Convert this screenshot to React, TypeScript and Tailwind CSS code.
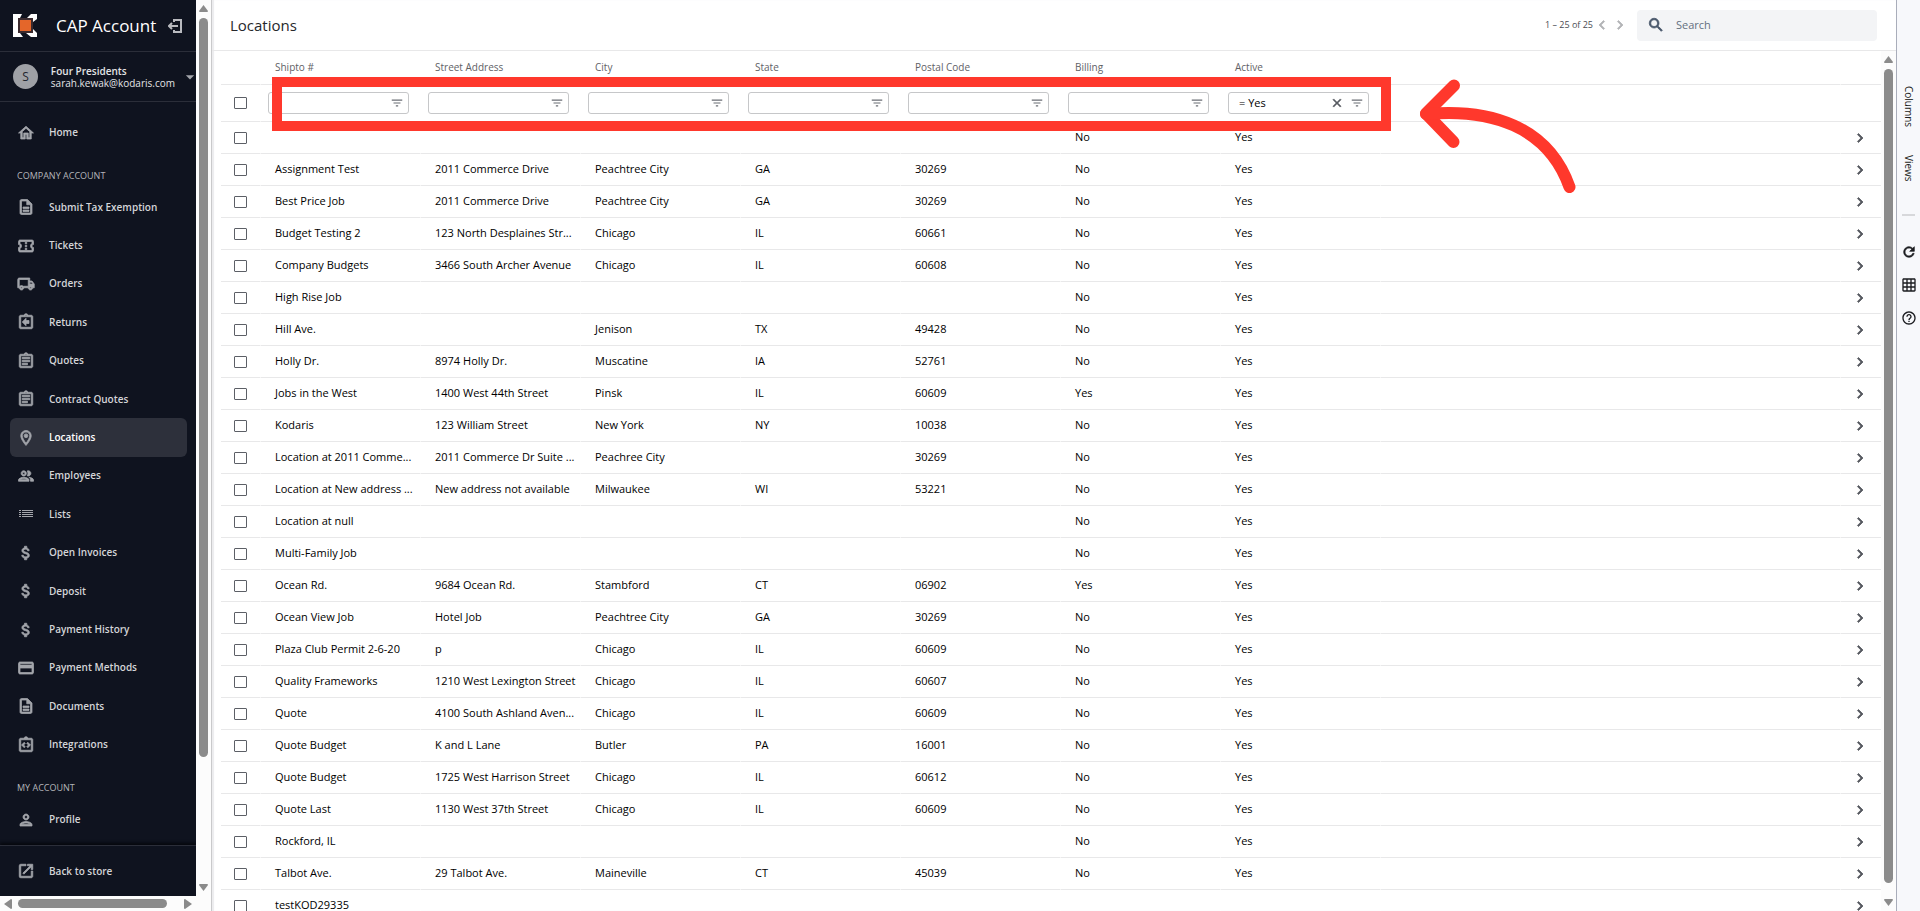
import {
  MdArrowDropDown,
  MdAttachMoney,
  MdChevronLeft,
  MdChevronRight,
  MdClose,
  MdFilterList,
  MdGridOn,
  MdHelpOutline,
  MdLaunch,
  MdOutlineAssignment,
  MdOutlineAssignmentReturn,
  MdOutlineConfirmationNumber,
  MdOutlineCreditCard,
  MdOutlineDescription,
  MdOutlineHome,
  MdOutlineIntegrationInstructions,
  MdOutlineLocalShipping,
  MdOutlineLocationOn,
  MdOutlinePeople,
  MdOutlinePerson,
  MdRefresh,
  MdSearch,
} from 'react-icons/md'

interface NavEntry {
  label: string
  icon: React.ComponentType<{ className?: string }>
  active?: boolean
}

function ListRowsIcon({ className }: { className?: string }) {
  return (
    <svg viewBox="0 0 18 18" className={className} aria-hidden="true">
      <path
        d="M2 5h2v1H2zM5 5h11v1H5zM2 7h2v1H2zM5 7h11v1H5zM2 9h2v1H2zM5 9h11v1H5zM2 11h2v1H2zM5 11h11v1H5z"
        fill="currentColor"
        stroke="none"
      />
    </svg>
  )
}

const companyNav: NavEntry[] = [
  { label: 'Submit Tax Exemption', icon: MdOutlineDescription },
  { label: 'Tickets', icon: MdOutlineConfirmationNumber },
  { label: 'Orders', icon: MdOutlineLocalShipping },
  { label: 'Returns', icon: MdOutlineAssignmentReturn },
  { label: 'Quotes', icon: MdOutlineAssignment },
  { label: 'Contract Quotes', icon: MdOutlineAssignment },
  { label: 'Locations', icon: MdOutlineLocationOn, active: true },
  { label: 'Employees', icon: MdOutlinePeople },
  { label: 'Lists', icon: ListRowsIcon },
  { label: 'Open Invoices', icon: MdAttachMoney },
  { label: 'Deposit', icon: MdAttachMoney },
  { label: 'Payment History', icon: MdAttachMoney },
  { label: 'Payment Methods', icon: MdOutlineCreditCard },
  { label: 'Documents', icon: MdOutlineDescription },
  { label: 'Integrations', icon: MdOutlineIntegrationInstructions },
]

const columns = ['Shipto #', 'Street Address', 'City', 'State', 'Postal Code', 'Billing', 'Active']

const locations: string[][] = [
  ['', '', '', '', '', 'No', 'Yes'],
  ['Assignment Test', '2011 Commerce Drive', 'Peachtree City', 'GA', '30269', 'No', 'Yes'],
  ['Best Price Job', '2011 Commerce Drive', 'Peachtree City', 'GA', '30269', 'No', 'Yes'],
  ['Budget Testing 2', '123 North Desplaines Str...', 'Chicago', 'IL', '60661', 'No', 'Yes'],
  ['Company Budgets', '3466 South Archer Avenue', 'Chicago', 'IL', '60608', 'No', 'Yes'],
  ['High Rise Job', '', '', '', '', 'No', 'Yes'],
  ['Hill Ave.', '', 'Jenison', 'TX', '49428', 'No', 'Yes'],
  ['Holly Dr.', '8974 Holly Dr.', 'Muscatine', 'IA', '52761', 'No', 'Yes'],
  ['Jobs in the West', '1400 West 44th Street', 'Pinsk', 'IL', '60609', 'Yes', 'Yes'],
  ['Kodaris', '123 William Street', 'New York', 'NY', '10038', 'No', 'Yes'],
  ['Location at 2011 Comme...', '2011 Commerce Dr Suite ...', 'Peachree City', '', '30269', 'No', 'Yes'],
  ['Location at New address ...', 'New address not available', 'Milwaukee', 'WI', '53221', 'No', 'Yes'],
  ['Location at null', '', '', '', '', 'No', 'Yes'],
  ['Multi-Family Job', '', '', '', '', 'No', 'Yes'],
  ['Ocean Rd.', '9684 Ocean Rd.', 'Stambford', 'CT', '06902', 'Yes', 'Yes'],
  ['Ocean View Job', 'Hotel Job', 'Peachtree City', 'GA', '30269', 'No', 'Yes'],
  ['Plaza Club Permit 2-6-20', 'p', 'Chicago', 'IL', '60609', 'No', 'Yes'],
  ['Quality Frameworks', '1210 West Lexington Street', 'Chicago', 'IL', '60607', 'No', 'Yes'],
  ['Quote', '4100 South Ashland Aven...', 'Chicago', 'IL', '60609', 'No', 'Yes'],
  ['Quote Budget', 'K and L Lane', 'Butler', 'PA', '16001', 'No', 'Yes'],
  ['Quote Budget', '1725 West Harrison Street', 'Chicago', 'IL', '60612', 'No', 'Yes'],
  ['Quote Last', '1130 West 37th Street', 'Chicago', 'IL', '60609', 'No', 'Yes'],
  ['Rockford, IL', '', '', '', '', 'No', 'Yes'],
  ['Talbot Ave.', '29 Talbot Ave.', 'Maineville', 'CT', '45039', 'No', 'Yes'],
  ['testKOD29335', '', '', '', '', '', ''],
]

function Logo() {
  return (
    <svg viewBox="0 0 25 23" className="h-[23px] w-[25px]" aria-hidden="true">
      <path d="M0 0h9l-2 4H5v15h2l3 4H0z" fill="#fff" />
      <path d="M14 4l4-4h6v5l-4 3v7l4 4v4h-6l-5-4h4V4z" fill="#fff" />
      <rect x="5" y="4" width="15" height="15" fill="#3b2a2e" />
      <rect x="7" y="6" width="11" height="11" fill="#e4662a" />
    </svg>
  )
}

function ExitIcon() {
  return (
    <svg viewBox="0 0 14 14" className="h-3.5 w-3.5" fill="none" stroke="currentColor" strokeWidth="2" aria-hidden="true">
      <path d="M6 3V1h7v12H6v-2" />
      <path d="M10 7H1M4 4L1 7l3 3" />
    </svg>
  )
}

function NavItem({ label, icon: Icon, active }: NavEntry) {
  return (
    <a
      href="#"
      className={`mr-[9px] ml-2.5 flex h-full items-center gap-[14px] rounded-md pl-[7px] text-[10px] font-semibold ${
        active ? 'bg-[#2d303b] text-white' : 'text-[#d4d5d8]'
      }`}
    >
      <Icon className="size-[18px] stroke-1 text-[#a3a5ab]" />
      {label}
    </a>
  )
}

function NavHeading({ children }: { children: React.ReactNode }) {
  return <h2 className="mt-3 flex h-6 items-center pl-[17px] text-[9px] text-[#b4b5ba]">{children}</h2>
}

function VerticalScrollbar({ thumb }: { thumb: string }) {
  return (
    <div className="flex h-full w-[15px] shrink-0 flex-col items-center bg-[#fcfcfc] py-[5px]">
      <svg viewBox="0 0 9 7" className="h-[7px] w-[9px]" fill="#8b8b8b" aria-hidden="true">
        <path d="M4.5 0L9 6q0 1-1 1H1Q0 7 0 6z" />
      </svg>
      <div className="flex w-full flex-1 justify-center pt-1.5">
        <div className={`w-[9px] rounded-full bg-[#8b8b8b] ${thumb}`} />
      </div>
      <svg viewBox="0 0 9 7" className="h-[7px] w-[9px]" fill="#8b8b8b" aria-hidden="true">
        <path d="M4.5 7L0 1q0-1 1-1h7q1 0 1 1z" />
      </svg>
    </div>
  )
}

function HorizontalScrollbar() {
  return (
    <div className="flex h-[15px] items-center bg-[#fcfcfc] pl-1">
      <svg viewBox="0 0 8 10" className="h-2.5 w-2" fill="#8b8b8b" aria-hidden="true">
        <path d="M0 5L7 0q1 0 1 1v8q0 1-1 1z" />
      </svg>
      <div className="ml-1.5 h-[9px] w-[149px] rounded-full bg-[#8b8b8b]" />
      <svg viewBox="0 0 8 10" className="ml-[17px] h-2.5 w-2" fill="#8b8b8b" aria-hidden="true">
        <path d="M8 5L1 0Q0 0 0 1v8q0 1 1 1z" />
      </svg>
    </div>
  )
}

function Sidebar() {
  return (
    <aside className="flex h-full shrink-0 flex-col">
      <div className="flex min-h-0 flex-1">
        <div className="flex w-[196px] flex-col overflow-hidden bg-[#0f131f]">
          <div className="flex h-[52px] shrink-0 items-center border-b border-[#2b2e39] pl-[13px]">
            <Logo />
            <span className="ml-[18px] w-28 text-[17px] text-white">CAP Account</span>
            <button type="button" aria-label="Sign out" className="text-[#b9babf]">
              <ExitIcon />
            </button>
          </div>

          <div className="flex h-[50px] shrink-0 items-center border-b border-[#2b2e39] pl-[13px]">
            <div className="flex size-[25px] items-center justify-center rounded-full bg-[#9fa1a6] text-xs text-[#22252f]">
              S
            </div>
            <div className="ml-[13px] w-[130px] text-[10px] leading-3 text-[#e3e4e6]">
              <div className="font-semibold">Four Presidents</div>
              <div>sarah.kewak@kodaris.com</div>
            </div>
            <button type="button" aria-label="Switch account" className="-mr-1 text-[#a3a5ab]">
              <MdArrowDropDown className="size-5" />
            </button>
          </div>

          <nav className="min-h-0 flex-1 overflow-hidden pt-[11px]">
            <div className="h-[39px]">
              <NavItem label="Home" icon={MdOutlineHome} />
            </div>
            <NavHeading>COMPANY ACCOUNT</NavHeading>
            <ul className="grid h-144 auto-rows-fr">
              {companyNav.map((item) => (
                <li key={item.label}>
                  <NavItem {...item} />
                </li>
              ))}
            </ul>
            <NavHeading>MY ACCOUNT</NavHeading>
            <div className="h-[39px]">
              <NavItem label="Profile" icon={MdOutlinePerson} />
            </div>
          </nav>

          <div className="h-[51px] shrink-0 border-t border-[#2b2e39] shadow-[0_-2px_3px_#05070c]">
            <NavItem label="Back to store" icon={MdLaunch} />
          </div>
        </div>
        <VerticalScrollbar thumb="h-[739px]" />
      </div>
      <HorizontalScrollbar />
    </aside>
  )
}

function Checkbox({ label }: { label: string }) {
  return (
    <input
      type="checkbox"
      aria-label={label}
      className="ml-[13px] block h-3 w-[13px] appearance-none rounded-[1px] border border-[#5c5f66] bg-white"
    />
  )
}

function FilterField({ label, value = '' }: { label: string; value?: string }) {
  return (
    <div className="mr-3 ml-[7px] flex h-[22px] items-center gap-1.5 rounded-[3px] border border-[#c6c7c9] bg-white pr-1">
      <input
        aria-label={`Filter ${label}`}
        defaultValue={value}
        className="w-0 flex-1 pl-2.5 text-[11px] text-black outline-none"
      />
      {value && (
        <button type="button" aria-label="Clear filter" className="text-[#55585f]">
          <MdClose className="size-3.5 stroke-1" />
        </button>
      )}
      <button type="button" aria-label={`${label} filter options`} className="text-[#6b6e75]">
        <MdFilterList className="size-3.5" />
      </button>
    </div>
  )
}

function Annotation() {
  return (
    <>
      <div className="pointer-events-none absolute top-[26px] left-[60px] h-[54px] w-[1119px] border-[10px] border-[#ff382c]" />
      <svg
        viewBox="0 0 170 130"
        className="pointer-events-none absolute top-[19px] left-[1198px] h-[130px] w-[170px]"
        fill="none"
        stroke="#ff382c"
        strokeWidth="12"
        strokeLinecap="round"
        strokeLinejoin="round"
        aria-hidden="true"
      >
        <path d="M44 15.500L16 43.500L43.500 72" />
        <path d="M16 44C80 38 138 56 159.500 117" />
      </svg>
    </>
  )
}

function LocationsTable() {
  return (
    <div className="relative min-w-0 flex-1 overflow-hidden pl-[9px]">
      <table className="w-full table-fixed border-separate border-spacing-0 text-left">
        <colgroup>
          <col className="w-10" />
          {columns.map((column) => (
            <col key={column} className="w-40" />
          ))}
          <col />
          <col className="w-10" />
        </colgroup>
        <thead>
          <tr className="h-[34px] text-[10px] text-[#5f6166]">
            <th className="border-r border-b border-r-white border-b-[#e8e8e9] p-0" />
            {columns.map((column) => (
              <th key={column} className="border-b border-b-[#e8e8e9] p-0 pl-3.5 font-medium">
                {column}
              </th>
            ))}
            <th className="border-r border-b border-r-white border-b-[#e8e8e9] p-0" />
            <th className="border-b border-b-[#e8e8e9] p-0" />
          </tr>
          <tr className="h-[37px]">
            <td className="border-r border-b border-r-white border-b-[#e8e8e9] p-0">
              <Checkbox label="Select all locations" />
            </td>
            {columns.map((column) => (
              <td key={column} className="border-b border-b-[#e8e8e9] p-0">
                <FilterField label={column} value={column === 'Active' ? '= Yes' : ''} />
              </td>
            ))}
            <td className="border-b border-b-[#e8e8e9] p-0" />
            <td className="border-b border-b-[#e8e8e9] p-0" />
          </tr>
        </thead>
        <tbody>
          {locations.map((row, index) => (
            <tr key={index} className="h-8 text-[11px] text-black">
              <td className="border-r border-b border-r-white border-b-[#e8e8e9] p-0">
                <Checkbox label={`Select row ${index + 1}`} />
              </td>
              {row.map((value, i) => (
                <td
                  key={columns[i]}
                  className="border-r border-b border-r-white border-b-[#e8e8e9] p-0 pl-3.5 whitespace-nowrap"
                >
                  {value}
                </td>
              ))}
              <td className="border-r border-b border-r-white border-b-[#e8e8e9] p-0" />
              <td className="border-b border-b-[#e8e8e9] p-0">
                <button type="button" aria-label="Open location" className="ml-2.5 block text-[#55585f]">
                  <MdChevronRight className="size-[18px] stroke-1" />
                </button>
              </td>
            </tr>
          ))}
        </tbody>
      </table>
      <Annotation />
    </div>
  )
}

function ToolRail() {
  return (
    <aside className="flex w-6 shrink-0 flex-col items-center border-l border-[#a9adba] bg-[#f7f8fb] pt-[86px] text-[#1b1c20]">
      <button type="button" className="text-[10px] leading-4 [writing-mode:vertical-rl]">
        Columns
      </button>
      <button type="button" className="mt-7 text-[10px] leading-4 [writing-mode:vertical-rl]">
        Views
      </button>
      <hr className="mt-8 w-[13px] border-t-2 border-[#d7d8db]" />
      <button type="button" aria-label="Refresh" className="mt-7">
        <MdRefresh className="size-4 stroke-1" />
      </button>
      <button type="button" aria-label="Grid view" className="mt-[17px]">
        <MdGridOn className="size-4" />
      </button>
      <button type="button" aria-label="Help" className="mt-[17px]">
        <MdHelpOutline className="size-4" />
      </button>
    </aside>
  )
}

export default function App() {
  return (
    // Material icons carry an unfilled bounding path that must not pick up the icon stroke
    <div className="flex h-screen overflow-hidden bg-white font-['Open_Sans','Noto_Sans',sans-serif] [&_path[fill=none]]:stroke-none">
      <Sidebar />

      <main className="flex min-w-0 flex-1 flex-col border-l border-[#c9c9cb] shadow-[inset_2px_0_1px_#ececee]">
        {/* Header */}
        <header className="flex h-[51px] shrink-0 items-center border-b border-[#e8e8e9] pr-[19px] pl-[18px]">
          <h1 className="flex-1 text-[15px] text-[#26272b]">Locations</h1>
          <span className="text-[9px] text-[#4a4c52]">1 – 25 of 25</span>
          <button type="button" aria-label="Previous page" className="text-[#b3b4b7]">
            <MdChevronLeft className="size-[18px] stroke-1" />
          </button>
          <button type="button" aria-label="Next page" className="text-[#b3b4b7]">
            <MdChevronRight className="size-[18px] stroke-1" />
          </button>
          <label className="ml-2 flex h-[31px] w-60 items-center rounded bg-[#f3f4f6] pl-2.5 text-[#475569]">
            <MdSearch className="size-[18px] stroke-1" />
            <input
              type="search"
              aria-label="Search"
              placeholder="Search"
              className="ml-[11px] w-0 flex-1 text-[11px] outline-none placeholder:text-[#64707f]"
            />
          </label>
        </header>

        {/* Grid */}
        <div className="flex min-h-0 flex-1">
          <LocationsTable />
          <VerticalScrollbar thumb="h-[814px]" />
        </div>
      </main>

      <ToolRail />
    </div>
  )
}
